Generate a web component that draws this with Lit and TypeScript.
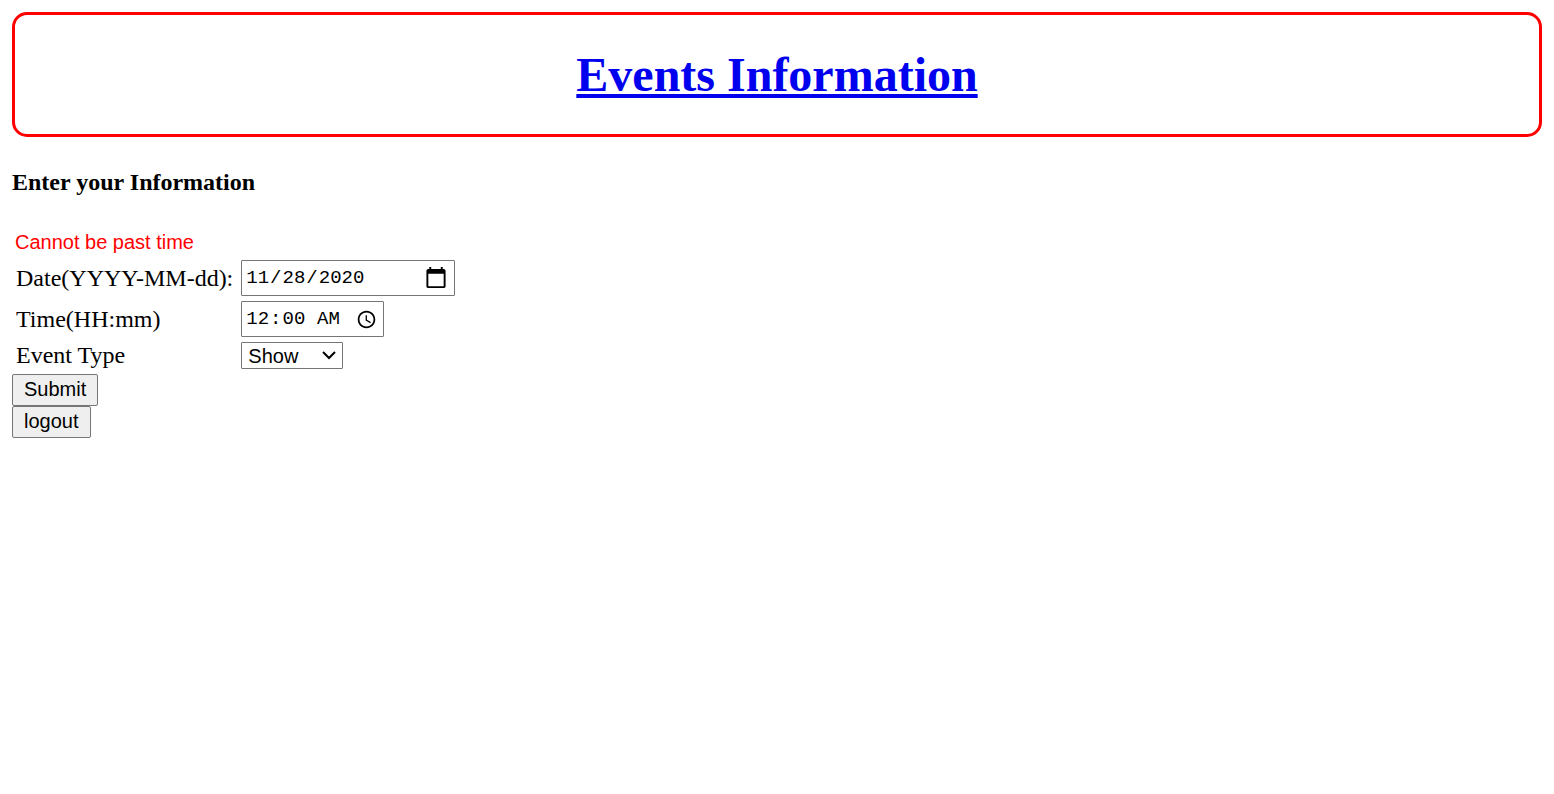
import { LitElement, html, css } from "lit";
import { customElement } from "lit/decorators.js";

@customElement("app-root")
export class AppRoot extends LitElement {
  static styles = css`
    :host {
      display: block;
      padding: 12px;
      font-family: "Liberation Serif", "Times New Roman", serif;
      font-size: 24px;
      color: #000;
      background: #fff;
    }
    .banner {
      border: 3px solid #f00;
      border-radius: 15px;
      text-align: center;
      padding: 32px 0;
    }
    .title {
      margin: 0;
      font-size: 48px;
      line-height: 55px;
    }
    .title a {
      color: #00e;
      text-decoration: underline;
      text-decoration-thickness: 4px;
      text-underline-offset: 3px;
    }
    .heading {
      margin: 32px 0;
      font-size: 24px;
      line-height: 27px;
    }
    .error {
      font-family: "Liberation Sans", Arial, sans-serif;
      font-size: 20px;
      line-height: 28px;
      color: #f00;
      padding: 0 3px;
    }
    .fields {
      display: grid;
      grid-template-columns: max-content max-content;
      column-gap: 8px;
      row-gap: 5px;
      padding: 4px 4px 5px;
      align-items: center;
      justify-items: start;
    }
    input,
    select,
    button {
      box-sizing: border-box;
      margin: 0;
      border: 1px solid #767676;
      border-radius: 1px;
      color: #000;
      background: #fff;
      font-family: "Liberation Sans", Arial, sans-serif;
      font-size: 20px;
    }
    input {
      height: 36px;
      font-family: "Liberation Mono", monospace;
      font-size: 19px;
      padding: 2px 6px 2px 3px;
    }
    .date {
      width: 214px;
    }
    .date::-webkit-calendar-picker-indicator {
      width: 24px;
      height: 24px;
      padding: 0;
    }
    .time {
      width: 143px;
    }
    .time::-webkit-calendar-picker-indicator {
      width: 21px;
      height: 21px;
      padding: 0;
    }
    .time::-webkit-datetime-edit-ampm-field {
      padding-left: 5px;
    }
    select {
      appearance: none;
      height: 27px;
      width: 102px;
      padding: 0 24px 0 6px;
      background: #fff
        url("data:image/svg+xml,%3Csvg xmlns='http://www.w3.org/2000/svg' width='14' height='9'%3E%3Cpath d='M1 1l6 6 6-6' fill='none' stroke='%23000' stroke-width='2'/%3E%3C/svg%3E")
        no-repeat right 6px center;
    }
    button {
      display: block;
      height: 32px;
      padding: 0 11px 2px;
      border-radius: 2px;
      background: #efefef;
    }
  `;

  render() {
    return html`
      <header class="banner">
        <h1 class="title"><a href="#">Events Information</a></h1>
      </header>
      <h3 class="heading">Enter your Information</h3>
      <form @submit=${(e: Event) => e.preventDefault()}>
        <div class="error" role="alert">Cannot be past time</div>
        <div class="fields">
          <label for="date">Date(YYYY-MM-dd):</label>
          <input class="date" id="date" type="date" value="2020-11-28" />
          <label for="time">Time(HH:mm)</label>
          <input class="time" id="time" type="time" value="00:00" />
          <label for="type">Event Type</label>
          <select id="type">
            <option>Show</option>
          </select>
        </div>
        <button type="submit">Submit</button>
      </form>
      <button type="button">logout</button>
    `;
  }
}
